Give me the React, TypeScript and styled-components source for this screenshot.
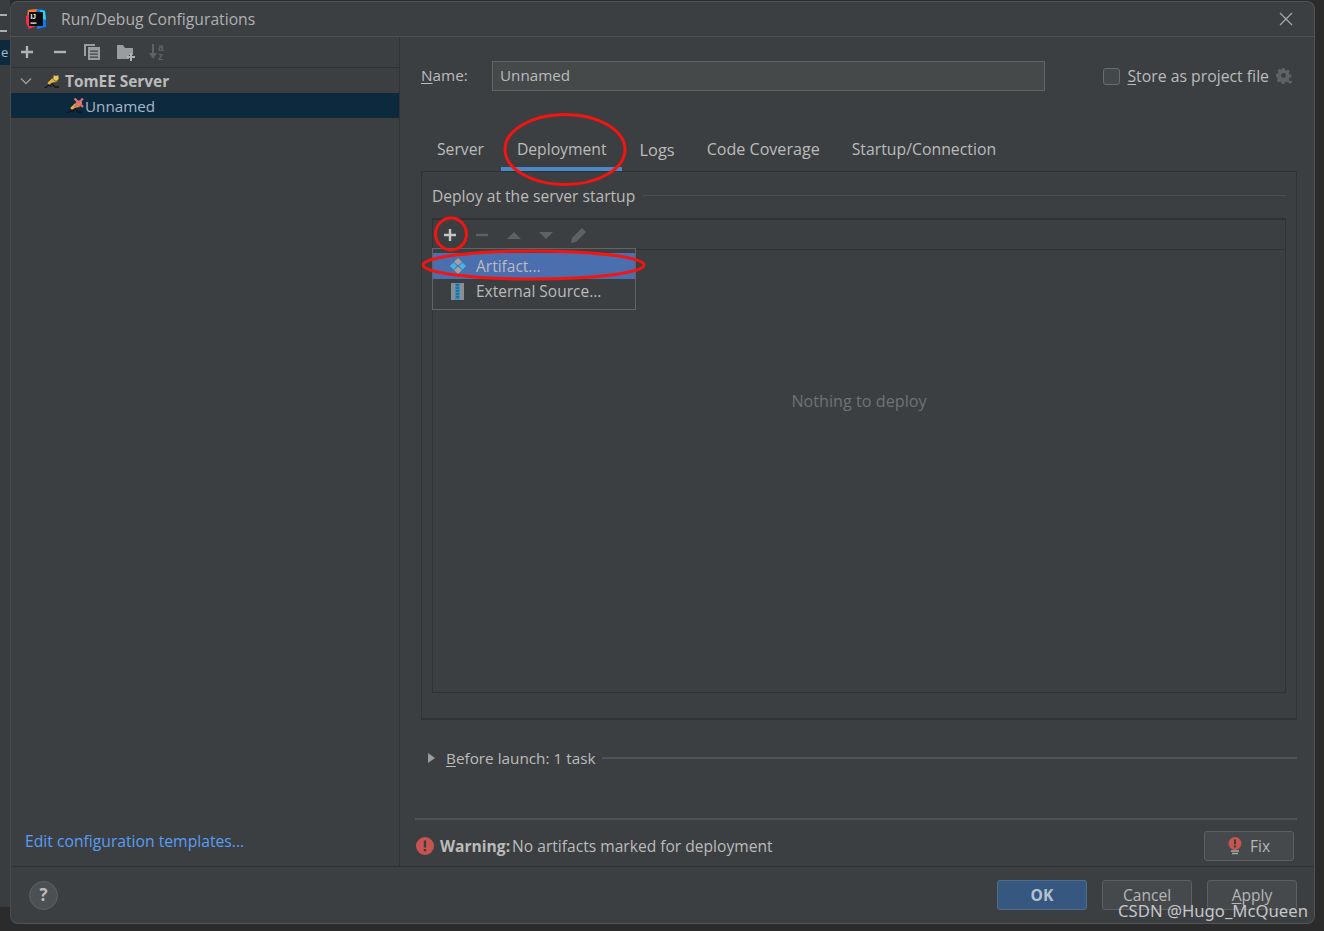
import React from 'react';
import styled, { createGlobalStyle } from 'styled-components';

const GlobalStyle = createGlobalStyle`
  html, body {
    margin: 0;
    padding: 0;
    background: #2b2b2b;
  }
  * {
    box-sizing: border-box;
  }
`;

const Page = styled.div`
  position: relative;
  width: 1324px;
  height: 931px;
  display: flex;
  overflow: hidden;
  background: #2b2b2b;
  color: #bbbbbb;
  font-family: 'Open Sans', 'Noto Sans', Arial, sans-serif;
  font-size: 15.6px;
`;

const LeftStrip = styled.div`
  width: 10px;
  flex: none;
  background: #3a3d3f;
  padding-top: 14px;
  display: flex;
  flex-direction: column;
`;

const StripMenu = styled.div`
  width: 7px;
  height: 18px;
  border-top: 2px solid #a9abac;
  border-bottom: 2px solid #a9abac;
  margin-bottom: 8px;
`;

const StripSelected = styled.div`
  height: 25px;
  background: #0d293e;
  color: #a9b7c6;
  line-height: 25px;
  padding-left: 1px;
  overflow: hidden;
  font-size: 13px;
`;

const StripFill = styled.div`
  flex: 1;
`;

const StripBottom = styled.div`
  height: 24px;
  background: #2b2b2b;
`;

const Dialog = styled.div`
  width: 1305px;
  height: 923px;
  margin-top: 1px;
  flex: none;
  display: flex;
  flex-direction: column;
  background: #3c3f41;
  border: 1px solid #515456;
  border-left-color: #494c4e;
  border-radius: 8px;
`;

const TitleBar = styled.div`
  height: 35px;
  flex: none;
  display: flex;
  align-items: center;
  padding: 0 21px 0 14px;
  border-bottom: 1px solid #515151;
`;

const TitleText = styled.div`
  margin-left: 14px;
  flex: 1;
  color: #afb1b3;
  font-size: 15.7px;
`;

const Body = styled.div`
  flex: 1;
  min-height: 0;
  display: flex;
`;

const Sidebar = styled.div`
  width: 389px;
  flex: none;
  display: flex;
  flex-direction: column;
  border-right: 1px solid #323232;
`;

const SideToolbar = styled.div`
  height: 31px;
  flex: none;
  display: flex;
  align-items: center;
  gap: 16.5px;
  padding-left: 8px;
  border-bottom: 1px solid #323232;
`;

const SortSlot = styled.span`
  display: flex;
  margin-left: -3px;
`;

const Tree = styled.div`
  flex: 1;
  padding-top: 1px;
`;

const TreeRow = styled.div<{ $selected?: boolean; $indent: number }>`
  height: ${(p) => (p.$selected ? 25 : 24)}px;
  display: flex;
  align-items: center;
  padding-left: ${(p) => p.$indent}px;
  background: ${(p) => (p.$selected ? '#0d293e' : 'transparent')};
  color: ${(p) => (p.$selected ? '#a9b7c6' : '#bbbbbb')};
`;

const TreeChevron = styled.span`
  display: flex;
  margin-right: 11px;
`;

const TreeLabel = styled.span<{ $bold?: boolean }>`
  font-weight: ${(p) => (p.$bold ? 700 : 400)};
  font-size: ${(p) => (p.$bold ? 15.4 : 15.2)}px;
  margin-left: ${(p) => (p.$bold ? 4 : 1)}px;
`;

const TemplatesLink = styled.a`
  color: #589df6;
  margin: 0 0 15px 14px;
  line-height: 20px;
  font-size: 15.7px;
`;

const Main = styled.div`
  flex: 1;
  min-width: 0;
  display: flex;
  flex-direction: column;
  padding: 24px 17px 0 15px;
`;

const NameRow = styled.div`
  height: 30px;
  flex: none;
  display: flex;
  align-items: center;
  padding: 0 4px 0 6px;
`;

const FieldLabel = styled.label`
  width: 71px;
  font-size: 15.3px;
  margin-top: -3px;
`;

const NameInput = styled.div`
  width: 553px;
  height: 30px;
  padding-left: 7px;
  line-height: 27px;
  font-size: 15.2px;
  background: #45494a;
  border: 1px solid #646464;
`;

const StoreOption = styled.div`
  margin-left: auto;
  display: flex;
  align-items: center;
  font-size: 15.8px;
`;

const CheckBox = styled.span`
  width: 17px;
  height: 17px;
  margin-right: 7px;
  background: #43494a;
  border: 1px solid #6b6b6b;
  border-radius: 3px;
`;

const GearWrap = styled.span`
  display: flex;
  margin-left: 7px;
`;

const Mnemonic = styled.span`
  text-decoration: underline;
  text-underline-offset: 2px;
`;

const Tabs = styled.div`
  height: 36px;
  flex: none;
  display: flex;
  margin: 44px 0 0 6px;
`;

const Tab = styled.div<{ $active?: boolean; $size?: number }>`
  height: 36px;
  padding: 0 16px;
  margin: 0 ${(p) => (p.$active ? 1 : 0)}px;
  line-height: 29px;
  font-size: ${(p) => p.$size ?? 15.7}px;
  border-bottom: 4px solid ${(p) => (p.$active ? '#4a88c7' : 'transparent')};
`;

const Panel = styled.div`
  height: 549px;
  flex: none;
  margin-left: 6px;
  padding: 0 10px;
  border: 1px solid #323232;
  border-top-color: #2f3132;
  border-bottom-width: 2px;
`;

const GroupTitle = styled.div`
  height: 47px;
  display: flex;
  align-items: center;
  gap: 8px;
  margin-bottom: -1px;
`;

const GroupLine = styled.div<{ $strong?: boolean }>`
  flex: 1;
  height: ${(p) => (p.$strong ? 2 : 1)}px;
  background: ${(p) => (p.$strong ? '#505253' : '#4b4e50')};
`;

const ListBox = styled.div`
  position: relative;
  height: 475px;
  border: 1px solid #323232;
  border-top-width: 2px;
  display: flex;
  flex-direction: column;
`;

const ListToolbar = styled.div`
  height: 30px;
  flex: none;
  display: flex;
  align-items: center;
  gap: 16px;
  padding-left: 9px;
  border-bottom: 1px solid #323232;
`;

const EmptyText = styled.div`
  padding-top: 140px;
  text-align: center;
  color: #6f7274;
  font-size: 16.2px;
`;

const PopupMenu = styled.div`
  position: absolute;
  left: -1px;
  top: 28px;
  width: 204px;
  height: 62px;
  padding-top: 4px;
  background: #3c3f41;
  border: 1px solid #646464;
`;

const PopupItem = styled.div<{ $active?: boolean }>`
  height: ${(p) => (p.$active ? 26 : 24)}px;
  display: flex;
  align-items: center;
  gap: 9px;
  padding-left: 16px;
  font-size: 15.5px;
  background: ${(p) => (p.$active ? '#4b6eaf' : 'transparent')};
`;

const BeforeLaunch = styled.div`
  height: 20px;
  flex: none;
  display: flex;
  align-items: center;
  margin: 28px 0 0 13px;
`;

const Triangle = styled.span`
  width: 0;
  height: 0;
  border-left: 7px solid #9a9da0;
  border-top: 5px solid transparent;
  border-bottom: 5px solid transparent;
  margin-right: 11px;
`;

const BeforeText = styled.span`
  margin-right: 7px;
  font-size: 15.3px;
`;

const Separator = styled.div`
  height: 2px;
  flex: none;
  margin-top: 50px;
  background: #505253;
`;

const WarningRow = styled.div`
  flex: none;
  display: flex;
  align-items: center;
  margin-top: 11px;
  padding: 0 3px 0 1px;
`;

const WarningBold = styled.b`
  margin: 0 2px 0 6px;
`;

const WarningText = styled.span`
  flex: 1;
`;

const Footer = styled.div`
  height: 57px;
  flex: none;
  display: flex;
  align-items: center;
  padding: 0 17px 0 18px;
  border-top: 1px solid #323232;
`;

const HelpButton = styled.div`
  width: 29px;
  height: 29px;
  border-radius: 50%;
  background: #4c5052;
  border: 1px solid #5e6060;
  color: #bbbbbb;
  font-weight: 700;
  font-size: 17px;
  line-height: 26px;
  text-align: center;
  margin-right: auto;
`;

const DialogButton = styled.button<{ $primary?: boolean }>`
  width: 90px;
  height: 30px;
  padding: 0;
  margin-left: 15px;
  display: flex;
  align-items: center;
  justify-content: center;
  gap: 8px;
  font-family: inherit;
  font-size: 15.6px;
  font-weight: ${(p) => (p.$primary ? 700 : 400)};
  color: ${(p) => (p.$primary ? '#b4c2d0' : '#b4b6b8')};
  background: ${(p) => (p.$primary ? '#365880' : '#46494b')};
  border: 1px solid ${(p) => (p.$primary ? '#4c708c' : '#5e6060')};
  border-radius: 3px;
`;

const Watermark = styled.div`
  position: absolute;
  left: 1118px;
  top: 899px;
  font-family: 'Noto Sans', 'DejaVu Sans', sans-serif;
  font-size: 16.7px;
  line-height: 24px;
  color: #c4c6c8;
  white-space: nowrap;
`;

const Annotations = styled.svg`
  position: absolute;
  left: 0;
  top: 0;
  pointer-events: none;
`;

const CloseIcon = () => (
  <svg width="14" height="14" viewBox="0 0 14 14" fill="none" stroke="#a8aaac" strokeWidth="1.2">
    <path d="M1 1l12 12M13 1L1 13" />
  </svg>
);

const LogoIcon = () => (
  <svg width="22" height="22" viewBox="0 0 22 22">
    <path d="M3 2l9-1-2 8-8 2z" fill="#fc801d" />
    <path d="M1 8l8-3 2 13-7 3-3-6z" fill="#fe2857" />
    <path d="M12 1l8 1 1 17-9 2z" fill="#087cfa" />
    <path d="M15 2l5 1 1 9-5-2z" fill="#21d7f7" />
    <rect x="4" y="4" width="14" height="14" fill="#0c0c0c" />
    <text x="5.4" y="11" fontSize="6.5" fontWeight="700" fontFamily="Liberation Sans, sans-serif" fill="#ffffff">
      IJ
    </text>
    <rect x="5.5" y="14.5" width="6" height="1.2" fill="#ffffff" />
  </svg>
);

const PlusIcon = ({ color = '#b0b2b4' }: { color?: string }) => (
  <svg width="16" height="16" viewBox="0 0 16 16" fill="none" stroke={color} strokeWidth="2.4">
    <path d="M8 2v12M2 8h12" />
  </svg>
);

const MinusIcon = ({ color = '#b0b2b4' }: { color?: string }) => (
  <svg width="16" height="16" viewBox="0 0 16 16" fill="none" stroke={color} strokeWidth="2.4">
    <path d="M2 8h12" />
  </svg>
);

const CopyIcon = () => (
  <svg width="16" height="16" viewBox="0 0 16 16" fill="#9a9da0">
    <path d="M0 0h11v2H2v10H0z" />
    <path d="M4 3h12v13H4zM6 6.5v1.2h8V6.5zm0 3v1.2h8V9.5zm0 3v1.2h8v-1.2z" fillRule="evenodd" />
  </svg>
);

const FolderPlusIcon = () => (
  <svg width="18" height="17" viewBox="0 0 18 17">
    <path d="M0 1h6l2 3h8v7h-4v4H0z" fill="#9a9da0" />
    <path d="M14 9v8M10 13h8" stroke="#b0b2b4" strokeWidth="2" />
  </svg>
);

const SortIcon = () => (
  <svg width="18" height="18" viewBox="0 0 18 18">
    <path d="M5 1v13" stroke="#5f6264" strokeWidth="2" />
    <path d="M1 10l4 6 4-6" fill="#5f6264" />
    <text x="10" y="8" fontSize="10" fontWeight="700" fontFamily="Liberation Sans, sans-serif" fill="#5f6264">
      a
    </text>
    <text x="10" y="17" fontSize="10" fontWeight="700" fontFamily="Liberation Sans, sans-serif" fill="#5f6264">
      z
    </text>
  </svg>
);

const ChevronIcon = () => (
  <svg width="14" height="14" viewBox="0 0 14 14" fill="none" stroke="#9a9da0" strokeWidth="1.4">
    <path d="M2 4.5l5 5 5-5" />
  </svg>
);

const CatIcon = ({ broken }: { broken?: boolean }) => (
  <svg width="17" height="16" viewBox="0 0 17 16">
    <path d="M0.5 14.5c2 .5 3-1 5-3M7 10l4 4h4M5 11l2 3" fill="none" stroke="#141414" strokeWidth="1.3" />
    <path d="M3 10l4-4 3-2 5 2-2 3-5 1-3 2z" fill="#e3b341" stroke="#2a2a2a" strokeWidth="0.5" />
    <path d="M9.500 1.500l1.500 1h2l1.500-1 .5 4-2 2.500h-2l-2-2.500z" fill="#edc95c" stroke="#2a2a2a" strokeWidth="0.5" />
    {broken && <path d="M7.500 .5l8.500 8.500M16 .5L7.500 9" stroke="#df6a78" strokeWidth="2.2" />}
  </svg>
);

const GearIcon = () => (
  <svg width="17" height="17" viewBox="0 0 17 17">
    <path
      d="M6.5 0h3l.4 2.2 1.5.7 1.900-1.200 2 2-1.200 1.800.7 1.500 2.200.5v3l-2.200.4-.7 1.500 1.200 1.800-2 2-1.900-1.200-1.500.7-.4 2.200h-3l-.4-2.200-1.500-.7-1.800 1.200-2-2 1.200-1.800-.7-1.500L0 9.500v-3l2.200-.4.7-1.500-1.200-1.800 2-2 1.800 1.200 1.500-.7z"
      transform="scale(.9)"
      fill="#5f6264"
    />
    <circle cx="7.500" cy="7.500" r="2.400" fill="#3c3f41" />
    <path d="M11 13h6l-3 3z" fill="#5f6264" />
  </svg>
);

const ArrowIcon = ({ down }: { down?: boolean }) => (
  <svg width="16" height="16" viewBox="0 0 16 16" fill="#5f6264">
    <path d={down ? 'M1 5h14l-7 7z' : 'M1 12h14L8 5z'} />
  </svg>
);

const PencilIcon = () => (
  <svg width="18" height="18" viewBox="0 0 18 18" fill="#5f6264">
    <path d="M12 2l4 4L6 16l-5 1 1-5z" />
  </svg>
);

const ArtifactIcon = () => (
  <svg width="18" height="18" viewBox="0 0 18 18">
    <path d="M9 1l4 4-4 3.500L5 5z" fill="#9fa2a5" />
    <path d="M9 17l4-4-4-3.500L5 13z" fill="#9fa2a5" />
    <path d="M1 9l3.500-3.500L8 9l-3.500 3.500z" fill="#40b6e0" />
    <path d="M17 9l-3.500-3.500L10 9l3.500 3.500z" fill="#40b6e0" />
  </svg>
);

const SourceIcon = () => (
  <svg width="18" height="18" viewBox="0 0 18 18">
    <rect x="2" y="1" width="13" height="17" fill="#8a8e91" />
    <rect x="6" y="1" width="5" height="17" fill="#3592c4" />
    <path d="M7 3h3M7 6h3M7 9h3M7 12h3M7 15h3" stroke="#2c4a5c" strokeWidth="1" />
  </svg>
);

const ErrorIcon = () => (
  <svg width="18" height="18" viewBox="0 0 18 18">
    <circle cx="9" cy="9" r="9" fill="#c75450" />
    <rect x="7.800" y="3.500" width="2.400" height="7" fill="#3c3f41" />
    <rect x="7.800" y="12" width="2.400" height="2.400" fill="#3c3f41" />
  </svg>
);

const BulbIcon = () => (
  <svg width="14" height="18" viewBox="0 0 14 18">
    <circle cx="7" cy="6.500" r="6.500" fill="#c75450" />
    <rect x="6" y="2.500" width="2" height="5" fill="#3c3f41" />
    <rect x="6" y="8.500" width="2" height="2" fill="#3c3f41" />
    <path d="M3 14h8M4 16.500h6" stroke="#a4a6a8" strokeWidth="1.500" />
  </svg>
);

function App() {
  return (
    <Page>
      <GlobalStyle />
      <LeftStrip>
        <StripMenu />
        <StripSelected>e</StripSelected>
        <StripFill />
        <StripBottom />
      </LeftStrip>

      <Dialog>
        <TitleBar>
          <LogoIcon />
          <TitleText>Run/Debug Configurations</TitleText>
          <CloseIcon />
        </TitleBar>

        <Body>
          <Sidebar>
            <SideToolbar>
              <PlusIcon />
              <MinusIcon />
              <CopyIcon />
              <FolderPlusIcon />
              <SortSlot>
                <SortIcon />
              </SortSlot>
            </SideToolbar>
            <Tree>
              <TreeRow $indent={8}>
                <TreeChevron>
                  <ChevronIcon />
                </TreeChevron>
                <CatIcon />
                <TreeLabel $bold>TomEE Server</TreeLabel>
              </TreeRow>
              <TreeRow $indent={56} $selected>
                <CatIcon broken />
                <TreeLabel>Unnamed</TreeLabel>
              </TreeRow>
            </Tree>
            <TemplatesLink>Edit configuration templates...</TemplatesLink>
          </Sidebar>

          <Main>
            <NameRow>
              <FieldLabel>
                <Mnemonic>N</Mnemonic>ame:
              </FieldLabel>
              <NameInput>Unnamed</NameInput>
              <StoreOption>
                <CheckBox />
                <span>
                  <Mnemonic>S</Mnemonic>tore as project file
                </span>
                <GearWrap>
                  <GearIcon />
                </GearWrap>
              </StoreOption>
            </NameRow>

            <Tabs>
              <Tab>Server</Tab>
              <Tab $active>Deployment</Tab>
              <Tab $size={16.4}>Logs</Tab>
              <Tab $size={16.1}>Code Coverage</Tab>
              <Tab $size={15.8}>Startup/Connection</Tab>
            </Tabs>

            <Panel>
              <GroupTitle>
                <span>Deploy at the server startup</span>
                <GroupLine />
              </GroupTitle>
              <ListBox>
                <ListToolbar>
                  <PlusIcon color="#c4c6c8" />
                  <MinusIcon color="#5f6264" />
                  <ArrowIcon />
                  <ArrowIcon down />
                  <PencilIcon />
                </ListToolbar>
                <EmptyText>Nothing to deploy</EmptyText>
                <PopupMenu>
                  <PopupItem $active>
                    <ArtifactIcon />
                    Artifact...
                  </PopupItem>
                  <PopupItem>
                    <SourceIcon />
                    External Source...
                  </PopupItem>
                </PopupMenu>
              </ListBox>
            </Panel>

            <BeforeLaunch>
              <Triangle />
              <BeforeText>
                <Mnemonic>B</Mnemonic>efore launch: 1 task
              </BeforeText>
              <GroupLine $strong />
            </BeforeLaunch>

            <Separator />

            <WarningRow>
              <ErrorIcon />
              <WarningBold>Warning:</WarningBold>
              <WarningText>No artifacts marked for deployment</WarningText>
              <DialogButton>
                <BulbIcon />
                Fix
              </DialogButton>
            </WarningRow>
          </Main>
        </Body>

        <Footer>
          <HelpButton>?</HelpButton>
          <DialogButton $primary>OK</DialogButton>
          <DialogButton>Cancel</DialogButton>
          <DialogButton>
            <span>
              <Mnemonic>A</Mnemonic>pply
            </span>
          </DialogButton>
        </Footer>
      </Dialog>

      <Annotations width="1324" height="931" fill="none" stroke="#f5140f" strokeWidth="3">
        <ellipse cx="565" cy="149.500" rx="60" ry="35" />
        <ellipse cx="451" cy="234" rx="15.500" ry="16" />
        <ellipse cx="533.500" cy="265" rx="110.500" ry="14" />
      </Annotations>
      <Watermark>CSDN @Hugo_McQueen</Watermark>
    </Page>
  );
}

export default App;
